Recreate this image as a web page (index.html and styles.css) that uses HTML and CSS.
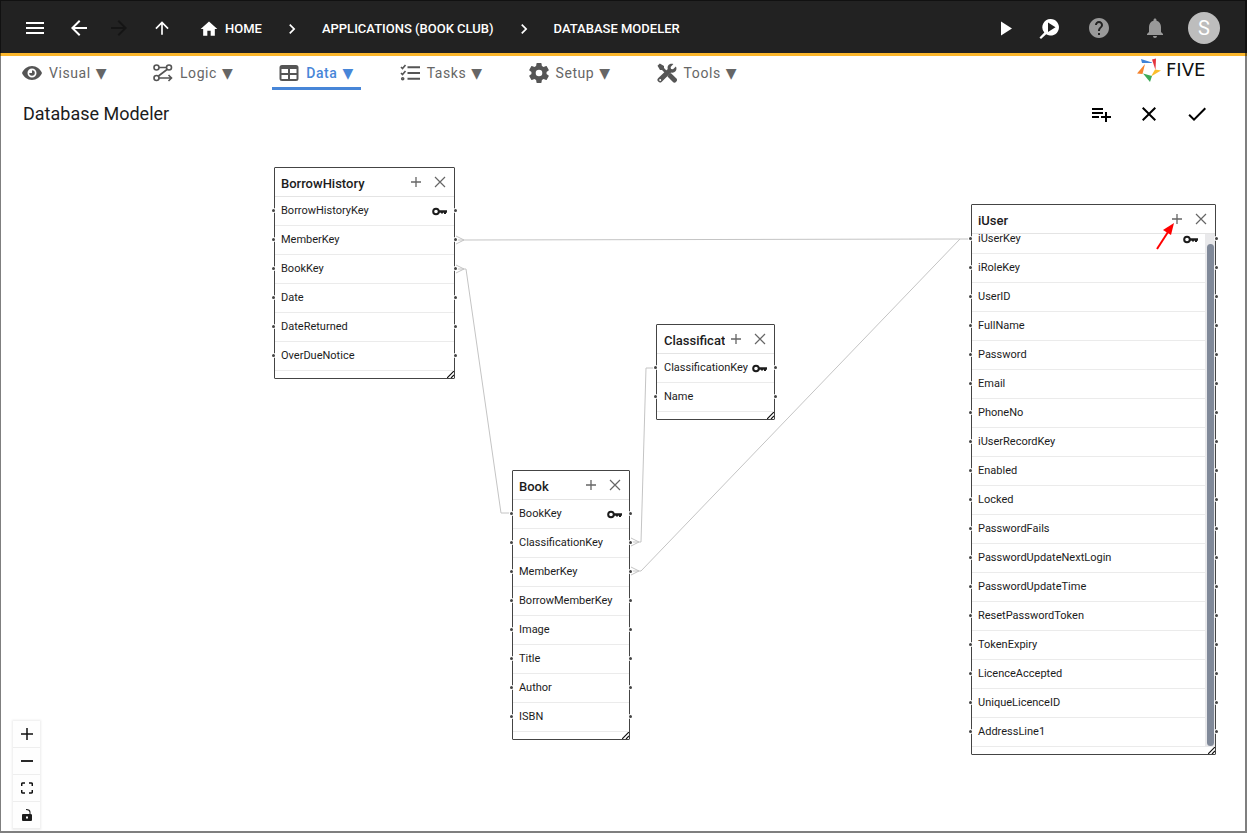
FILE: index.html
```html
<!DOCTYPE html>
<html lang="en">
<head>
<meta charset="utf-8">
<title>Database Modeler</title>
<link rel="stylesheet" href="styles.css">
</head>
<body>
<svg class="defs" aria-hidden="true">
  <symbol id="plus" viewBox="0 0 12 12"><path d="M6 1v10M1 6h10" stroke="currentColor" stroke-width="1.300" fill="none"/></symbol>
  <symbol id="cross" viewBox="0 0 12 12"><path d="M1 1l10 10M11 1L1 11" stroke="currentColor" stroke-width="1.200" fill="none"/></symbol>
  <symbol id="key" viewBox="0 0 15 9"><circle cx="4" cy="4.500" r="2.800" fill="none" stroke="currentColor" stroke-width="2"/><path d="M7 3.300h8v2.400h-1V7h-2V5.700h-1V6.500H9V5.700H7z" fill="currentColor"/></symbol>
  <symbol id="chevron" viewBox="0 0 24 24"><path d="M10 6L8.590 7.410 13.170 12l-4.580 4.590L10 18l6-6z"/></symbol>
  <symbol id="grip" viewBox="0 0 7 7"><path d="M0 7L7 0M4 7l3-3" stroke="#111" stroke-width="1.200" fill="none"/></symbol>
</svg>

<header class="topbar">
  <button class="icon menu" aria-label="Menu"><svg viewBox="0 0 24 24"><path d="M3 18h18v-2H3v2zm0-5h18v-2H3v2zm0-7v2h18V6H3z"/></svg></button>
  <button class="icon back" aria-label="Back"><svg viewBox="0 0 24 24"><path d="M20 11H7.830l5.590-5.590L12 4l-8 8 8 8 1.410-1.410L7.830 13H20v-2z"/></svg></button>
  <button class="icon forward" aria-label="Forward" disabled><svg viewBox="0 0 24 24"><path d="M12 4l-1.410 1.410L16.170 11H4v2h12.170l-5.580 5.590L12 20l8-8z"/></svg></button>
  <button class="icon up" aria-label="Up"><svg viewBox="0 0 24 24"><path d="M4 12l1.410 1.410L11 7.830V20h2V7.830l5.580 5.590L20 12l-8-8-8 8z"/></svg></button>
  <nav class="crumbs" aria-label="Breadcrumb">
    <a href="#"><svg class="home" viewBox="0 0 24 24"><path d="M10 20v-6h4v6h5v-8h3L12 3 2 12h3v8z"/></svg>HOME</a>
    <svg class="sep"><use href="#chevron"/></svg>
    <a href="#">APPLICATIONS (BOOK CLUB)</a>
    <svg class="sep"><use href="#chevron"/></svg>
    <a href="#">DATABASE MODELER</a>
  </nav>
  <div class="actions">
    <button class="icon" aria-label="Run"><svg viewBox="0 0 24 24"><path d="M7 5.500v14l11-7z"/></svg></button>
    <button class="icon inspect" aria-label="Inspect"><svg viewBox="0 0 24 24"><path fill-rule="evenodd" d="M13.500 3a8.300 8.300 0 1 1-4.300 15.300L4 23l-1.500-1.500 4.800-4.900A8.300 8.300 0 0 1 13.500 3zM11 6.500v9.500l7.500-4.700z"/></svg></button>
    <button class="icon dim help" aria-label="Help"><svg viewBox="0 0 24 24"><path d="M12 2C6.480 2 2 6.480 2 12s4.480 10 10 10 10-4.480 10-10S17.520 2 12 2zm1 17h-2v-2h2v2zm2.070-7.750l-.9.920C13.450 12.900 13 13.500 13 15h-2v-.5c0-1.100.450-2.100 1.170-2.830l1.240-1.260c.370-.360.590-.860.590-1.410 0-1.100-.9-2-2-2s-2 .9-2 2H8c0-2.210 1.790-4 4-4s4 1.790 4 4c0 .880-.360 1.680-.930 2.250z"/></svg></button>
    <button class="icon dim bell" aria-label="Notifications"><svg viewBox="0 0 24 24"><path d="M12 22c1.100 0 2-.9 2-2h-4c0 1.100.890 2 2 2zm6-6v-5c0-3.070-1.640-5.640-4.500-6.320V4c0-.830-.670-1.500-1.500-1.500s-1.500.670-1.500 1.500v.680C7.630 5.360 6 7.920 6 11v5l-2 2v1h16v-1l-2-2z"/></svg></button>
    <button class="avatar">S</button>
  </div>
</header>

<div class="tabbar">
  <nav class="tabs">
    <button class="tab"><svg viewBox="0 0 20 16"><path fill-rule="evenodd" d="M10 1C5.500 1 1.700 3.900 0 8c1.700 4.100 5.500 7 10 7s8.300-2.900 10-7c-1.700-4.100-5.500-7-10-7zm0 2.500a4.500 4.500 0 1 1 0 9 4.500 4.500 0 0 1 0-9zm0 1.700v2.800H7.200A2.800 2.800 0 1 0 10 5.200z"/></svg>Visual <span>▼</span></button>
    <button class="tab"><svg viewBox="0 0 20 20" class="line"><circle cx="3.500" cy="4.500" r="2.500"/><circle cx="16" cy="4.500" r="2.500"/><circle cx="3.500" cy="15" r="2.500"/><path d="M6 4.500h7.500M14 6.500L5.500 13M6 15h12M15.500 12l3 3-3 3"/></svg>Logic <span>▼</span></button>
    <button class="tab active"><svg viewBox="0 0 20 20"><path fill-rule="evenodd" d="M3 2h14a2.500 2.500 0 0 1 2.500 2.500v11A2.500 2.500 0 0 1 17 18H3a2.500 2.500 0 0 1-2.500-2.500v-11A2.500 2.500 0 0 1 3 2zM2.500 6v4H9V6zM11 6v4h6.500V6zM2.500 12v4H9v-4zM11 12v4h6.500v-4z"/></svg>Data <span>▼</span></button>
    <button class="tab"><svg viewBox="0 0 20 20" class="line"><path d="M7.500 4.200H20M7.500 10H20M7.500 15.800H20" stroke-width="2"/><path d="M1 4l1.500 1.500L5.500 2M1 10l1.500 1.500L5.500 8"/><circle cx="2.700" cy="15.800" r="1" /></svg>Tasks <span>▼</span></button>
    <button class="tab"><svg viewBox="2 2 20 20"><path d="M19.500 13c0-.3.100-.6.100-1s0-.7-.1-1l2.100-1.600c.2-.2.300-.4.100-.7l-2-3.400c-.1-.2-.4-.3-.6-.2l-2.500 1a7 7 0 0 0-1.700-1l-.4-2.600c0-.3-.2-.5-.5-.5h-4c-.3 0-.5.200-.5.500l-.4 2.600a7 7 0 0 0-1.700 1l-2.500-1c-.2-.1-.5 0-.6.200l-2 3.400c-.1.300-.1.500.1.700L4.500 11c0 .3-.1.600-.1 1s0 .7.100 1l-2.100 1.600c-.2.200-.2.400-.1.700l2 3.400c.1.200.4.300.6.200l2.500-1a7 7 0 0 0 1.700 1l.4 2.600c0 .3.200.5.5.5h4c.3 0 .5-.2.500-.5l.4-2.600a7 7 0 0 0 1.700-1l2.500 1c.2.100.5 0 .6-.2l2-3.400c.2-.3.100-.5-.1-.7zM12 15.300a3.300 3.300 0 1 1 0-6.600 3.300 3.300 0 0 1 0 6.600z"/></svg>Setup <span>▼</span></button>
    <button class="tab"><svg viewBox="0 0 20 20"><path d="M2.800.5L7 3v2l3.200 3.200-2 2L5 7H3L.5 2.800zM12 11l1.800-1 5.400 5.300a2.400 2.400 0 0 1-3.500 3.500L10.500 13.500z"/><path fill-rule="evenodd" d="M18.900 3.500L16 6.300l-2-.4-.4-2L16.400 1c-2-.8-4.200-.2-5.200 1.500-.7 1.100-.8 2.300-.4 3.600L1.300 15a2.400 2.400 0 0 0 3.500 3.700l9.300-9.300c1.600.5 3.200.2 4.400-1.100 1.200-1.400 1.200-3.300.4-4.800zM3.200 16a1 1 0 1 1 0 2 1 1 0 0 1 0-2z"/></svg>Tools <span>▼</span></button>
  </nav>
  <div class="logo">
    <svg viewBox="0 0 24 24"><path d="M4 1l11 3.500V5H5z" fill="#3f83d8"/><path d="M15 1.500L19 .500 18.500 12z" fill="#e5343d"/><path d="M24 12.500l-10 6 4-7z" fill="#fbbd2a"/><path d="M6 15.500L15 18l-2 6z" fill="#3daa57"/><path d="M8 6L0 15.500 5.500 16z" fill="#f5822c"/></svg>
    <span>FIVE</span>
  </div>
</div>

<div class="titlebar">
  <h1>Database Modeler</h1>
  <button class="icon" aria-label="Add table"><svg viewBox="0 0 24 24"><path d="M14 10H3v2h11v-2zm0-4H3v2h11V6zm4 8v-4h-2v4h-4v2h4v4h2v-4h4v-2h-4zM3 16h7v-2H3v2z"/></svg></button>
  <button class="icon" aria-label="Cancel"><svg viewBox="0 0 24 24"><path d="M19 6.410L17.590 5 12 10.590 6.410 5 5 6.410 10.590 12 5 17.590 6.410 19 12 13.410 17.590 19 19 17.590 13.410 12z"/></svg></button>
  <button class="icon" aria-label="Save"><svg viewBox="0 0 24 24"><path d="M9 16.170L4.830 12l-1.420 1.410L9 19 21 7l-1.410-1.410z"/></svg></button>
</div>

<main class="canvas">
  <svg class="edges" aria-hidden="true">
    <path d="M456 102H463L960 101H971M456 98l8 4-8 4"/>
    <path d="M456 131H466L501 375H512M456 127l8 4-8 4"/>
    <path d="M631 404H641L646 230H656M631 400l8 4-8 4"/>
    <path d="M631 433H641L960 101M631 429l8 4-8 4"/>
  </svg>

  <section class="node borrow">
    <header><h2>BorrowHistory</h2><button aria-label="Add field"><svg><use href="#plus"/></svg></button><button aria-label="Remove"><svg><use href="#cross"/></svg></button></header>
    <ul>
      <li>BorrowHistoryKey<svg class="key"><use href="#key"/></svg></li>
      <li>MemberKey</li><li>BookKey</li><li>Date</li><li>DateReturned</li><li>OverDueNotice</li>
    </ul>
    <footer><svg><use href="#grip"/></svg></footer>
  </section>

  <section class="node classification">
    <header><h2>Classificat</h2><button aria-label="Add field"><svg><use href="#plus"/></svg></button><button aria-label="Remove"><svg><use href="#cross"/></svg></button></header>
    <ul>
      <li>ClassificationKey<svg class="key"><use href="#key"/></svg></li>
      <li>Name</li>
    </ul>
    <footer><svg><use href="#grip"/></svg></footer>
  </section>

  <section class="node book">
    <header><h2>Book</h2><button aria-label="Add field"><svg><use href="#plus"/></svg></button><button aria-label="Remove"><svg><use href="#cross"/></svg></button></header>
    <ul>
      <li>BookKey<svg class="key"><use href="#key"/></svg></li>
      <li>ClassificationKey</li><li>MemberKey</li><li>BorrowMemberKey</li><li>Image</li><li>Title</li><li>Author</li><li>ISBN</li>
    </ul>
    <footer><svg><use href="#grip"/></svg></footer>
  </section>

  <section class="node user">
    <header><h2>iUser</h2><button aria-label="Add field"><svg><use href="#plus"/></svg></button><button aria-label="Remove"><svg><use href="#cross"/></svg></button></header>
    <div class="scroller">
      <ul>
        <li>iUserKey<svg class="key"><use href="#key"/></svg></li>
        <li>iRoleKey</li><li>UserID</li><li>FullName</li><li>Password</li><li>Email</li><li>PhoneNo</li><li>iUserRecordKey</li><li>Enabled</li><li>Locked</li><li>PasswordFails</li><li>PasswordUpdateNextLogin</li><li>PasswordUpdateTime</li><li>ResetPasswordToken</li><li>TokenExpiry</li><li>LicenceAccepted</li><li>UniqueLicenceID</li><li>AddressLine1</li>
      </ul>
      <div class="track"><div class="thumb"></div></div>
    </div>
    <footer><svg><use href="#grip"/></svg></footer>
  </section>

  <svg class="pointer" viewBox="0 0 20 28" aria-hidden="true"><path d="M2 26L13 9" stroke="#f00" stroke-width="2"/><path d="M19 0L8 7l8 5z" fill="#f00"/></svg>

  <div class="controls">
    <button aria-label="Zoom in"><svg viewBox="0 0 12 12"><path d="M6 0v12M0 6h12" stroke="#111" stroke-width="1.500"/></svg></button>
    <button aria-label="Zoom out"><svg viewBox="0 0 12 12"><path d="M0 6h12" stroke="#111" stroke-width="1.800"/></svg></button>
    <button aria-label="Fit view"><svg viewBox="0 0 12 12"><path d="M.700 4V2Q.700 1 1.700 1H4M8 1h2.300q1 0 1 1v2M11.300 8v2q0 1-1 1H8M4 11H1.700q-1 0-1-1V8" fill="none" stroke="#111" stroke-width="1.500"/></svg></button>
    <button aria-label="Toggle lock"><svg viewBox="0 0 12 12"><path fill-rule="evenodd" d="M2 5h6.500V3Q8 1 5 1V0q4.500 0 4.500 3v2Q11 5 11 6v5q0 1-1 1H2q-1 0-1-1V6q0-1 1-1zm3 2.500v2h2v-2z"/></svg></button>
  </div>
</main>
</body>
</html>
```
FILE: styles.css
```css
* { box-sizing: border-box; }

body {
  margin: 0;
  min-height: 100vh;
  display: flex;
  flex-direction: column;
  background: #fff;
  color: #1c1c1c;
  font-family: Roboto, "Liberation Sans", sans-serif;
}

/* window frame */
body::after {
  content: "";
  position: fixed;
  inset: 0;
  border: solid rgba(0, 0, 0, 0.5);
  border-width: 1px 2px 2px 1px;
  pointer-events: none;
}

.defs { position: absolute; width: 0; height: 0; }

button {
  margin: 0;
  padding: 0;
  border: 0;
  background: none;
  color: inherit;
  font: inherit;
  display: flex;
  align-items: center;
  justify-content: center;
}

svg { display: block; flex: none; fill: currentColor; }

.icon svg { width: 24px; height: 24px; }

.topbar {
  display: flex;
  align-items: center;
  height: 56px;
  padding: 0 27px 0 23px;
  border-bottom: 3px solid #fbb62b;
  background: #222;
  color: #fff;
}
.topbar > .icon, .actions { margin-top: 3px; }
.back { margin-left: 20px; }
.forward { margin-left: 16px; color: #151515; }
.up { margin-left: 21px; }
.icon.up svg { width: 20px; height: 20px; }

.crumbs { display: flex; align-items: center; margin: 4px 0 0 27px; }
.crumbs a {
  display: flex;
  align-items: center;
  gap: 6px;
  color: #fff;
  font-size: 13px;
  font-weight: 500;
  line-height: 20px;
  text-decoration: none;
}
.home { width: 20px; height: 20px; }
.sep { width: 20px; height: 20px; margin: 0 20px; }

.actions { display: flex; align-items: center; margin-left: auto; }
.inspect { margin-left: 19px; }
.help { margin-left: 26px; }
.bell { margin-left: 32px; }
.dim { color: #999; }
.avatar {
  width: 32px;
  height: 32px;
  margin-left: 21px;
  border-radius: 50%;
  background: #bdbdbd;
  color: #fff;
  font-size: 20px;
}

.tabbar { display: flex; justify-content: space-between; height: 34px; padding: 0 23px 0 15px; }
.tabs { display: flex; gap: 32px; }
.tab {
  gap: 5px;
  padding: 3px 7px 0;
  border-bottom: 3px solid transparent;
  color: #666;
  font-size: 14px;
  font-weight: 400;
  letter-spacing: 0.04em;
  white-space: nowrap;
}
.tab svg { width: 20px; height: 20px; margin-right: 2px; color: #555; }
.tab span { font-family: "DejaVu Sans", sans-serif; }
.line { fill: none; stroke: currentColor; stroke-width: 1.6; }
.tab.active { color: #4786d8; border-color: #4786d8; border-radius: 3px 3px 0 0; font-weight: 500; }

.logo { display: flex; align-items: center; gap: 5px; height: 28px; }
.logo svg { width: 24px; height: 24px; }
.logo span { min-width: 58px; color: #111; font: 18px/20px "DejaVu Sans", sans-serif; }

.titlebar { display: flex; align-items: center; height: 48px; padding: 0 26px 0 23px; }
h1 { margin: 0 auto 0 0; font-size: 18px; font-weight: 400; line-height: 24px; }
.titlebar .icon { width: 48px; height: 48px; color: #000; }

.canvas { position: relative; flex: 1; }
.edges { position: absolute; inset: 0; width: 100%; height: 100%; fill: none; stroke: #c4c4c4; }

.node {
  position: absolute;
  border: 1px solid #444;
  border-radius: 1px;
  background: #fff;
}
.borrow { left: 274px; top: 29px; width: 181px; }
.classification { left: 656px; top: 186px; width: 119px; }
.book { left: 512px; top: 332px; width: 118px; }
.user { left: 971px; top: 66px; width: 245px; }

.node header {
  position: relative;
  z-index: 1;
  display: flex;
  align-items: center;
  height: 29px;
  padding: 0 1px 0 6px;
  border-bottom: 1px solid #e4e4e4;
  background: #fff;
}
.node h2 {
  flex: 1;
  margin: 0;
  padding-top: 3px;
  overflow: hidden;
  font-size: 13px;
  font-weight: 500;
  line-height: 20px;
  white-space: nowrap;
}
.node header button { width: 26px; height: 24px; color: #666; }
.node header button:nth-of-type(1) { width: 22px; }
.node header svg { width: 12px; height: 12px; }

.node ul { margin: 0; padding: 0; list-style: none; }
.node li {
  position: relative;
  display: flex;
  align-items: center;
  justify-content: space-between;
  height: 29px;
  padding: 0 7px 1px 6px;
  border-bottom: 1px solid #ebebeb;
  font-size: 11px;
  line-height: 16px;
  white-space: nowrap;
}
.classification header, .classification li { padding-left: 7px; }
.key { width: 15px; height: 9px; margin-top: 2px; }

/* connection handles */
.node li::before, .node li::after {
  content: "";
  position: absolute;
  top: 12px;
  width: 3px;
  height: 3px;
  border-radius: 50%;
  background: #444;
  box-shadow: 0 0 0 1px #fff;
}
.node li::before { left: -3px; }
.node li::after { right: -3px; }

.node footer { display: flex; align-items: flex-end; justify-content: flex-end; height: 7px; }
.node footer svg { width: 7px; height: 7px; }

.scroller { display: flex; }
.scroller ul { flex: 1; margin-top: -9px; }
.scroller li::after { right: -13px; }
.track { width: 10px; padding: 10px 1px 1px 2px; background: #e9e9eb; }
.thumb { height: 100%; border-radius: 4px; background: #808999; }

.pointer { position: absolute; z-index: 2; left: 1155px; top: 85px; width: 20px; height: 28px; }

.controls {
  position: absolute;
  left: 13px;
  bottom: 4px;
  width: 27px;
  box-shadow: 0 0 2px 1px rgba(0, 0, 0, 0.08);
}
.controls button { width: 27px; height: 27px; border-bottom: 1px solid #eee; background: #fefefe; }
.controls svg { width: 12px; height: 12px; }
```
